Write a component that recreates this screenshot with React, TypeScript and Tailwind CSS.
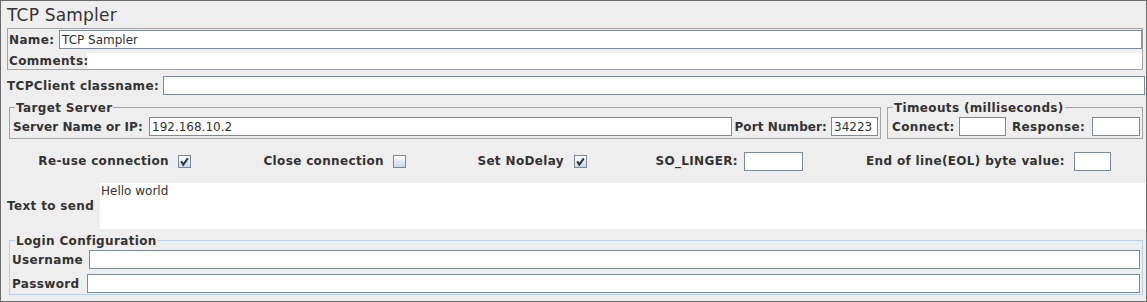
// ─── TCP Sampler (JMeter-like Swing panel) ───────────────────────────────────

const bold = 'font-bold tracking-[0.35px] whitespace-nowrap'

type BoxProps = {
  value?: string
  className?: string
}

function TextBox({ value, className = '' }: BoxProps) {
  return (
    <div
      className={`h-[19px] bg-white border border-[#7a8a99] flex items-center pl-[2px] leading-[14px] whitespace-nowrap overflow-hidden ${className}`}
    >
      {value}
    </div>
  )
}

function CheckBox({ checked }: { checked?: boolean }) {
  return (
    <div className="w-[13px] h-[13px] shrink-0 border border-[#7a8a99] bg-gradient-to-b from-white to-[#c6d8ec] flex items-center justify-center">
      {checked && (
        <svg width="11" height="11" viewBox="0 0 11 11">
          <path d="M2.2 5.2 L4.3 8.6 L8.8 2.4" fill="none" stroke="#333" strokeWidth="2" strokeLinejoin="miter" />
        </svg>
      )}
    </div>
  )
}

type GroupProps = {
  legend: string
  className?: string
  border?: string
  children: React.ReactNode
}

function Group({ legend, className = '', border = 'border-[#a3a3a3]', children }: GroupProps) {
  return (
    <div className={`relative border ${border} ${className}`}>
      <span className={`absolute left-[5px] -top-[7px] px-[1px] bg-[#eeeeee] leading-[14px] ${bold}`}>
        {legend}
      </span>
      {children}
    </div>
  )
}

function Labeled({ label, width, gap, children }: { label: string; width: string; gap: string; children: React.ReactNode }) {
  return (
    <div className={`flex items-center justify-end shrink-0 ${width} ${gap}`}>
      <span className={bold}>{label}</span>
      {children}
    </div>
  )
}

export default function App() {
  return (
    <div className="w-[1147px] h-[302px] border border-[#6b6b6b] bg-[#eeeeee] flex flex-col text-[12px] text-[#333333] font-['DejaVu_Sans',sans-serif] leading-[14px]">
      {/* Title */}
      <div className="h-[27px] shrink-0 pl-[6px] flex items-center text-[17px] tracking-[0.2px] leading-[20px]">TCP Sampler</div>

      {/* Name / Comments */}
      <div className="ml-[6px] mr-[3px] h-[42px] shrink-0 border border-[#a3a3a3] flex flex-col">
        <div className="mt-[1px] h-[19px] flex items-center">
          <span className={`pl-[1px] w-[51px] shrink-0 ${bold}`}>Name:</span>
          <TextBox value="TCP Sampler" className="flex-1" />
        </div>
        <div className="mt-[4px] h-[16px] flex items-center">
          <span className={`pl-[1px] w-[79px] shrink-0 ${bold}`}>Comments:</span>
          <div className="flex-1 h-[16px] bg-white" />
        </div>
      </div>

      {/* TCPClient classname */}
      <div className="mt-[6px] h-[19px] shrink-0 flex items-center pl-[6px] mr-[1px]">
        <span className={`w-[156px] shrink-0 ${bold}`}>TCPClient classname:</span>
        <TextBox className="flex-1" />
      </div>

      {/* Target Server / Timeouts */}
      <div className="mt-[12px] h-[32px] shrink-0 flex ml-[8px] mr-[3px]">
        <Group legend="Target Server" className="w-[872px] h-[32px] shrink-0 flex items-start">
          <div className="mt-[9px] h-[19px] w-full flex items-center pl-[3px] pr-[2px]">
            <span className="w-[136px] shrink-0 font-bold tracking-[0.1px] whitespace-nowrap">Server Name or IP:</span>
            <TextBox value="192.168.10.2" className="flex-1" />
            <span className="ml-[2px] font-bold tracking-[0.1px] whitespace-nowrap">Port Number:</span>
            <TextBox value="34223" className="ml-[4px] w-[47px] shrink-0 pl-[1px]" />
          </div>
        </Group>
        <Group legend="Timeouts (milliseconds)" className="ml-[6px] w-[256px] h-[32px] shrink-0 flex items-start">
          <div className="mt-[9px] h-[19px] w-full flex items-center pl-[4px] pr-[2px]">
            <span className={`w-[67px] shrink-0 ${bold}`}>Connect:</span>
            <TextBox className="w-[47px] shrink-0" />
            <span className={`ml-[6px] w-[80px] shrink-0 ${bold}`}>Response:</span>
            <TextBox className="w-[48px] shrink-0" />
          </div>
        </Group>
      </div>

      {/* Options row */}
      <div className="mt-[13px] h-[18px] shrink-0 flex items-center">
        <Labeled label="Re-use connection" width="w-[190px]" gap="gap-[9px]">
          <CheckBox checked />
        </Labeled>
        <Labeled label="Close connection" width="w-[215px]" gap="gap-[9px]">
          <CheckBox />
        </Labeled>
        <Labeled label="Set NoDelay" width="w-[181px]" gap="gap-[10px]">
          <CheckBox checked />
        </Labeled>
        <Labeled label="SO_LINGER:" width="w-[216px]" gap="gap-[6px]">
          <TextBox className="w-[59px] h-[18px]" />
        </Labeled>
        <Labeled label="End of line(EOL) byte value:" width="w-[308px]" gap="gap-[9px]">
          <TextBox className="w-[37px] h-[18px]" />
        </Labeled>
      </div>

      {/* Text to send */}
      <div className="mt-[13px] h-[46px] shrink-0 flex items-center pl-[6px]">
        <span className={`w-[93px] shrink-0 ${bold}`}>Text to send</span>
        <div className="flex-1 h-[46px] bg-white pl-[1px] pt-[1px]">Hello world</div>
      </div>

      {/* Login Configuration */}
      <Group legend="Login Configuration" border="border-[#b8cfe5]" className="mt-[11px] ml-[8px] mr-[3px] h-[55px] shrink-0 flex flex-col">
        <div className="mt-[9px] h-[19px] flex items-center pl-[2px] pr-[2px]">
          <span className={`w-[77px] shrink-0 ${bold}`}>Username</span>
          <TextBox className="flex-1" />
        </div>
        <div className="mt-[5px] h-[19px] flex items-center pl-[2px] pr-[2px]">
          <span className={`w-[75px] shrink-0 ${bold}`}>Password</span>
          <TextBox className="flex-1" />
        </div>
      </Group>
    </div>
  )
}
